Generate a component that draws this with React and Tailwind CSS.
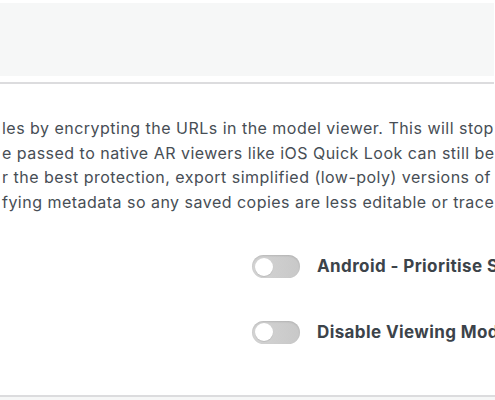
import React, { useState } from 'react';

const lines = [
    "les by encrypting the URLs in the model viewer. This will stop",
    "e passed to native AR viewers like iOS Quick Look can still be",
    "r the best protection, export simplified (low-poly) versions of",
    "fying metadata so any saved copies are less editable or trace",
];

function Toggle({ on, onChange, label }) {
    return (
        <div className="flex items-center gap-[17px]">
            <button
                onClick={() => onChange(!on)}
                className="relative w-[48px] h-[23px] shrink-0 rounded-full bg-gradient-to-r from-[#d4d4d4] to-[#c8c8c8] shadow-[inset_0_1px_2px_rgba(0,0,0,0.12)]"
            >
                <span className="absolute left-[3px] top-[2.5px] w-[18px] h-[18px] rounded-full bg-white shadow-[0_1px_1px_rgba(0,0,0,0.1)]" />
            </button>
            <span className="whitespace-nowrap text-[17px] font-bold tracking-[0.4px] text-[#3c434a]">{label}</span>
        </div>
    );
}

export default function App() {
    const [android, setAndroid] = useState(false);
    const [disable, setDisable] = useState(false);

    return (
        <div className="w-[495px] h-[400px] overflow-hidden bg-white font-['Inter','Liberation_Sans',Arial,sans-serif]">
            {/* Top panel */}
            <div className="pt-[3px] pr-px">
                <div className="h-[73px] bg-[#f6f7f7]" />
            </div>
            <div className="mt-[6px] mr-px h-[2px] bg-[#dcdcde]" />

            {/* Description */}
            <div className="pt-[32px] overflow-hidden text-[16px] leading-[24.5px] tracking-[0.48px] text-[#474e55]">
                {lines.map((l, i) => (
                    <div key={i} className="whitespace-nowrap pl-[2px]">{l}</div>
                ))}
            </div>

            {/* Toggles */}
            <div className="flex flex-col gap-[40px] pl-[252px] pt-[40px]">
                <Toggle on={android} onChange={setAndroid} label="Android - Prioritise Scene Viewer" />
                <Toggle on={disable} onChange={setDisable} label="Disable Viewing Mode" />
            </div>

            <div className="mt-[50px] h-[2px] bg-[#dcdcde]" />
            <div className="h-[10px] bg-[#f6f7f7]" />
        </div>
    );
}
